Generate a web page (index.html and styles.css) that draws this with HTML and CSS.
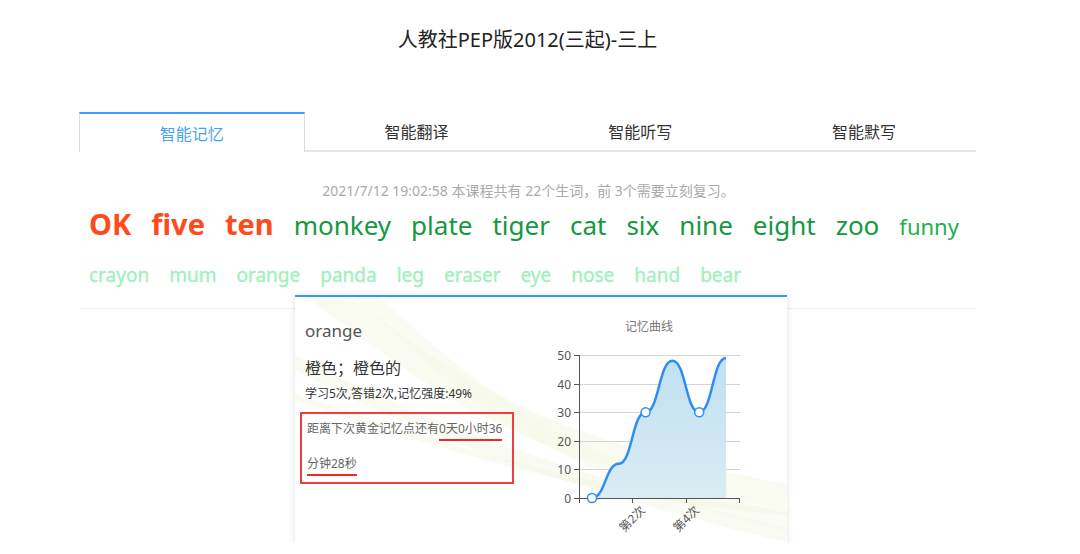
FILE: index.html
```html
<!DOCTYPE html>
<html lang="zh-CN">
<head>
  <meta charset="UTF-8" />
  <title>人教社PEP版2012(三起)-三上</title>
  <link rel="stylesheet" href="styles.css">
</head>
<body>
  <h1 class="course-title">人教社PEP版2012(三起)-三上</h1>

  <div class="main">
    <div class="tabs">
      <div class="tab active">智能记忆</div>
      <div class="tab">智能翻译</div>
      <div class="tab">智能听写</div>
      <div class="tab">智能默写</div>
    </div>

    <p class="summary">2021/7/12 19:02:58 本课程共有 22个生词，前 3个需要立刻复习。</p>

    <div class="words">
      <div class="word-row row-main">
        <span class="word urgent">OK</span>
        <span class="word urgent">five</span>
        <span class="word urgent">ten</span>
        <span class="word">monkey</span>
        <span class="word">plate</span>
        <span class="word">tiger</span>
        <span class="word">cat</span>
        <span class="word">six</span>
        <span class="word">nine</span>
        <span class="word">eight</span>
        <span class="word">zoo</span>
        <span class="word small">funny</span>
      </div>
      <div class="word-row row-light">
        <span class="word">crayon</span>
        <span class="word">mum</span>
        <span class="word">orange</span>
        <span class="word">panda</span>
        <span class="word">leg</span>
        <span class="word">eraser</span>
        <span class="word">eye</span>
        <span class="word">nose</span>
        <span class="word">hand</span>
        <span class="word">bear</span>
      </div>
    </div>

    <!-- word detail popup -->
    <div class="word-card">
      <svg class="card-bg" width="492" height="246" viewBox="0 0 492 246">
        <path d="M20 -10 C120 60 200 150 492 200" fill="none" stroke="#eef4d8" stroke-width="26" opacity="0.35"/>
        <path d="M60 -10 C150 70 240 170 492 225" fill="none" stroke="#f3f7e4" stroke-width="18" opacity="0.45"/>
        <path d="M-10 60 C100 120 250 180 492 238" fill="none" stroke="#f2f6e2" stroke-width="14" opacity="0.45"/>
        <path d="M0 100 C150 150 300 200 492 215" fill="none" stroke="#eef3d6" stroke-width="6" opacity="0.35"/>
      </svg>

      <div class="card-info">
        <div class="card-word">orange</div>
        <div class="card-meaning">橙色；橙色的</div>
        <div class="card-stats">学习5次,答错2次,记忆强度:49%</div>
        <div class="card-next">
          <div>距离下次黄金记忆点还有<span class="mark">0天0小时36</span></div>
          <div><span class="mark">分钟28秒</span></div>
        </div>
      </div>

      <svg class="curve" width="220" height="228" viewBox="0 0 220 228">
        <defs>
          <linearGradient id="area" x1="0" y1="0" x2="0" y2="1">
            <stop offset="0" stop-color="#bfe0f0"/>
            <stop offset="1" stop-color="#dbecf4"/>
          </linearGradient>
        </defs>
        <text x="104" y="16" text-anchor="middle" class="curve-title">记忆曲线</text>

        <g stroke="#d4d4d4" stroke-width="1">
          <line x1="34" y1="40.5" x2="195" y2="40.5"/>
          <line x1="34" y1="69.5" x2="195" y2="69.5"/>
          <line x1="34" y1="97.5" x2="195" y2="97.5"/>
          <line x1="34" y1="126.5" x2="195" y2="126.5"/>
          <line x1="34" y1="154.5" x2="195" y2="154.5"/>
        </g>

        <path d="M47 183 C60.4 183 60.4 148.7 73.8 148.7 C87.2 148.7 87.2 97.2 100.6 97.2 C114 97.2 114 45.7 127.4 45.7 C140.8 45.7 140.8 97.2 154.2 97.2 C167.6 97.2 167.6 42.9 181 42.9 L181 183 Z" fill="url(#area)"/>
        <path d="M47 183 C60.4 183 60.4 148.7 73.8 148.7 C87.2 148.7 87.2 97.2 100.6 97.2 C114 97.2 114 45.7 127.4 45.7 C140.8 45.7 140.8 97.2 154.2 97.2 C167.6 97.2 167.6 42.9 181 42.9" fill="none" stroke="#2d8ef0" stroke-width="2.5"/>

        <g stroke="#555" stroke-width="1">
          <line x1="34.5" y1="40" x2="34.5" y2="183.5"/>
          <line x1="34" y1="183.5" x2="195" y2="183.5"/>
          <line x1="29" y1="40.5" x2="34" y2="40.5"/>
          <line x1="29" y1="69.5" x2="34" y2="69.5"/>
          <line x1="29" y1="97.5" x2="34" y2="97.5"/>
          <line x1="29" y1="126.5" x2="34" y2="126.5"/>
          <line x1="29" y1="154.5" x2="34" y2="154.5"/>
          <line x1="29" y1="183.5" x2="34" y2="183.5"/>
          <line x1="34.5" y1="183" x2="34.5" y2="188"/>
          <line x1="87.5" y1="183" x2="87.5" y2="188"/>
          <line x1="141.5" y1="183" x2="141.5" y2="188"/>
          <line x1="194.5" y1="183" x2="194.5" y2="188"/>
        </g>

        <g class="axis-label" text-anchor="end">
          <text x="26" y="44.5">50</text>
          <text x="26" y="73.5">40</text>
          <text x="26" y="101.5">30</text>
          <text x="26" y="130.5">20</text>
          <text x="26" y="158.5">10</text>
          <text x="26" y="187.5">0</text>
          <text transform="translate(101 196) rotate(-45)">第2次</text>
          <text transform="translate(155 196) rotate(-45)">第4次</text>
        </g>

        <g fill="#fff" stroke="#2d8ef0" stroke-width="1.5">
          <circle cx="47" cy="183" r="4.5"/>
          <circle cx="100.6" cy="97.2" r="4.5"/>
          <circle cx="154.2" cy="97.2" r="4.5"/>
        </g>
      </svg>
    </div>
  </div>
</body>
</html>
```

FILE: styles.css
```css
* {
  box-sizing: border-box;
}

body {
  margin: 0;
  background: #ffffff;
  color: #333;
  font-family: "Noto Sans", "Noto Sans CJK SC", sans-serif;
}

.course-title {
  margin: 26px 0 0 0;
  font-size: 20px;
  font-weight: normal;
  line-height: 28px;
  text-align: center;
  color: #222;
  padding-right: 25px;
}

.main {
  width: 897px;
  margin: 58px 0 0 79px;
}

/* tabs */
.tabs {
  display: flex;
  height: 40px;
}

.tab {
  flex: 1;
  display: flex;
  align-items: center;
  justify-content: center;
  font-size: 16px;
  color: #333;
  border-bottom: 2px solid #e6e6e6;
}

.tab.active {
  color: #4aa3f0;
  border-top: 2px solid #3d9ff5;
  border-left: 1px solid #dddddd;
  border-right: 1px solid #dddddd;
  border-bottom: none;
}

.summary {
  margin: 29px 0 0 0;
  font-size: 14px;
  line-height: 20px;
  color: #aaaaaa;
  text-align: center;
  padding-left: 2px;
}

/* word list */
.words {
  padding: 0 10px 13px 10px;
  border-bottom: 1px solid #eeeeee;
}

.word-row {
  display: flex;
  align-items: baseline;
  gap: 0 20px;
}

.row-main {
  height: 46px;
  line-height: 46px;
  font-size: 26px;
  color: #15983f;
}

.row-main .urgent {
  font-size: 29px;
  font-weight: bold;
  color: #ff4b1c;
}

.row-main .small {
  font-size: 22px;
  color: #24b04c;
}

.row-light {
  margin-top: 8px;
  height: 40px;
  line-height: 40px;
  font-size: 19px;
  color: #9ff0bd;
  -webkit-text-stroke: 0.3px #9ff0bd;
}

/* popup card, overlaps the divider under the words */
.word-card {
  position: relative;
  margin: -14px 0 0 216px;
  width: 492px;
  height: 248px;
  display: flex;
  background: #ffffff;
  border-top: 2px solid #3399ff;
  box-shadow: 0 1px 6px rgba(0, 0, 0, 0.12);
  overflow: hidden;
}

.card-bg {
  position: absolute;
  left: 0;
  top: 0;
}

.card-info {
  position: relative;
  width: 250px;
  padding: 22px 0 0 10px;
}

.card-word {
  font-size: 17px;
  line-height: 24px;
  color: #555;
}

.card-meaning {
  margin-top: 13px;
  font-size: 16px;
  line-height: 24px;
  color: #333;
}

.card-stats {
  margin-top: 4px;
  font-size: 12px;
  line-height: 20px;
  color: #333;
}

.card-next {
  margin: 8px 0 0 -5px;
  width: 214px;
  height: 72px;
  padding: 2px 0 0 5px;
  border: 2px solid #f53c3c;
  font-size: 12px;
  line-height: 26px;
  color: #666;
}

.card-next div + div {
  margin-top: 9px;
}

.mark {
  border-bottom: 2px solid #f02828;
  padding-bottom: 2px;
}

.curve {
  position: relative;
  margin: 18px 0 0 0;
}

.curve-title {
  font-size: 12px;
  fill: #777;
}

.axis-label {
  font-size: 12px;
  fill: #555;
}
```
